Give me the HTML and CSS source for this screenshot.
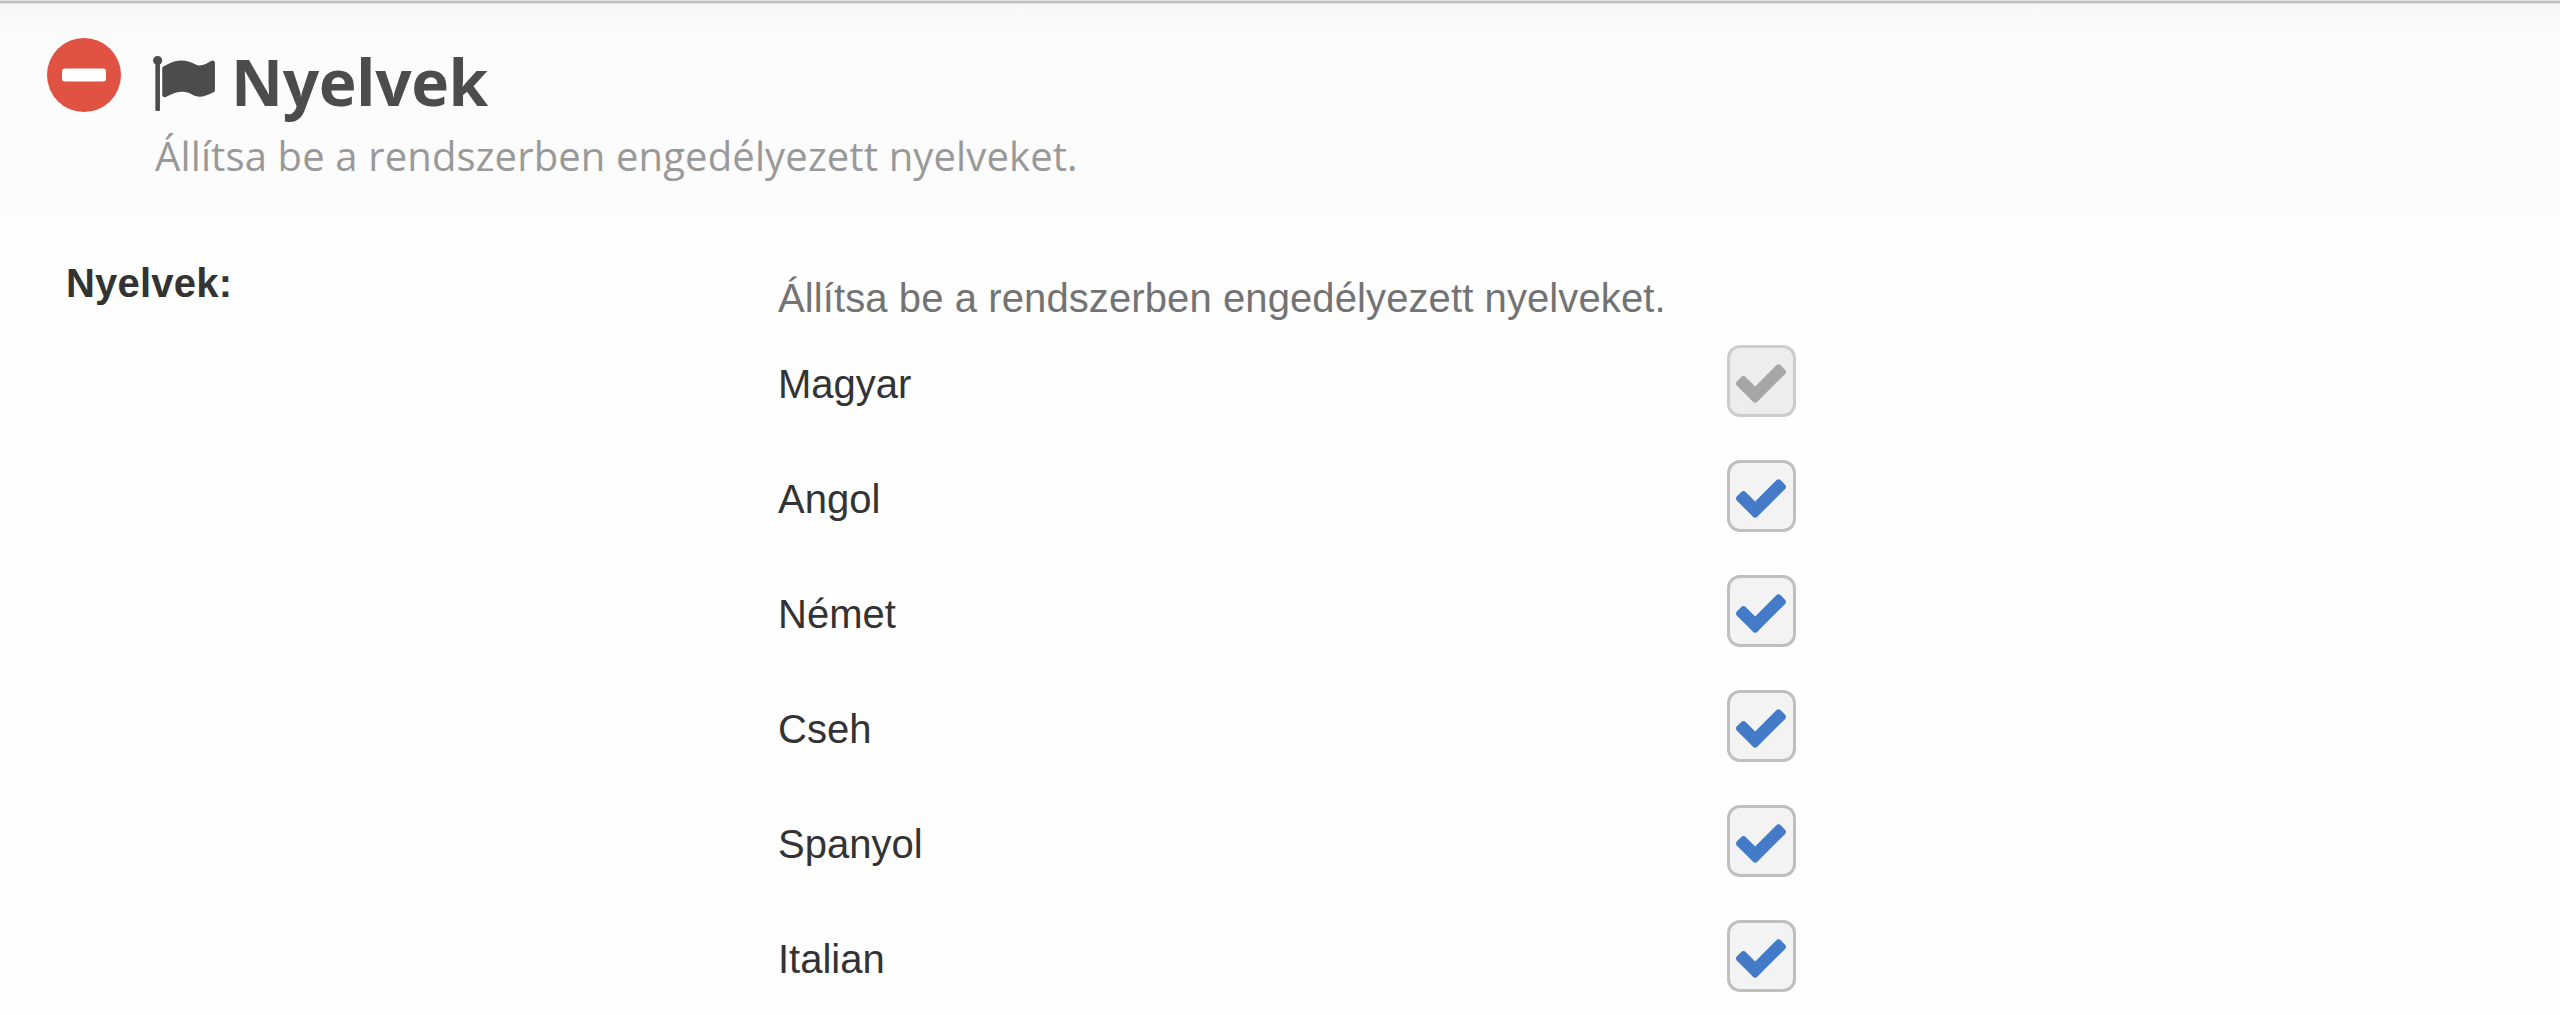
FILE: index.html
```html
<!DOCTYPE html>
<html lang="hu">
<head>
    <meta charset="UTF-8">
    <meta name="viewport" content="width=device-width, initial-scale=1.0">
    <title>Nyelvek</title>
    <link rel="stylesheet" href="styles.css">
</head>
<body>
    <svg width="0" height="0" class="sprite">
        <symbol id="check" viewBox="0 0 1550 1188">
            <path d="M1550 232q0 40-28 68l-724 724-136 136q-28 28-68 28t-68-28l-136-136-362-362q-28-28-28-68t28-68l136-136q28-28 68-28t68 28l294 295 656-657q28-28 68-28t68 28l136 136q28 28 28 68z"/>
        </symbol>
    </svg>

    <header class="section-header">
        <svg class="minus" viewBox="0 0 74 74">
            <circle cx="37" cy="37" r="37" fill="#e05242"/>
            <rect x="15" y="30.500" width="44" height="13" rx="3" fill="#fff"/>
        </svg>
        <div class="heading">
            <h1>
                <svg class="flag" viewBox="64 128 1728 1536">
                    <path d="M320 256q0 72-64 110v1266q0 13-9.500 22.500t-22.500 9.500h-64q-13 0-22.500-9.500t-9.500-22.500v-1266q-64-38-64-110 0-53 37.500-90.500t90.500-37.500 90.500 37.500 37.500 90.500zm1472 64v763q0 25-12.500 38.500t-39.500 27.500q-215 116-369 116-61 0-123.500-22t-108.500-48-115.500-48-142.500-22q-192 0-464 146-17 9-33 9-26 0-45-19t-19-45v-742q0-32 31-55 21-14 79-43 236-120 421-120 107 0 200 29t219 88q38 19 88 19 54 0 117.500-21t110-47 88-47 54.500-21q26 0 45 19t19 45z"/>
                </svg>
                <span>Nyelvek</span>
            </h1>
            <p>Állítsa be a rendszerben engedélyezett nyelveket.</p>
        </div>
    </header>

    <main class="form-row">
        <div class="label">Nyelvek:</div>
        <div class="languages">
            <p class="help">Állítsa be a rendszerben engedélyezett nyelveket.</p>
            <div class="language">
                <span>Magyar</span>
                <span class="checkbox disabled"><svg><use href="#check"/></svg></span>
            </div>
            <div class="language">
                <span>Angol</span>
                <span class="checkbox"><svg><use href="#check"/></svg></span>
            </div>
            <div class="language">
                <span>Német</span>
                <span class="checkbox"><svg><use href="#check"/></svg></span>
            </div>
            <div class="language">
                <span>Cseh</span>
                <span class="checkbox"><svg><use href="#check"/></svg></span>
            </div>
            <div class="language">
                <span>Spanyol</span>
                <span class="checkbox"><svg><use href="#check"/></svg></span>
            </div>
            <div class="language">
                <span>Italian</span>
                <span class="checkbox"><svg><use href="#check"/></svg></span>
            </div>
        </div>
    </main>
</body>
</html>
```
FILE: styles.css
```css
* {
    box-sizing: border-box;
}
body {
    margin: 0;
    height: 1015px;
    overflow: hidden;
    background: #fefefe;
    color: #333;
    font-family: "Liberation Sans", Arial, sans-serif;
    font-size: 40px;
}
.sprite {
    display: none;
}
h1, p {
    margin: 0;
}
.section-header {
    display: flex;
    height: 213px;
    padding: 38px 0 0 47px;
    background:
        linear-gradient(#e0e2e0 1px, #c0c2c0 1px, #c0c2c0 3px, #e0e2e0 3px) top / 100% 4px no-repeat,
        linear-gradient(#f7f7f7, #fcfcfc 45px);
    font-family: "Open Sans", sans-serif;
}
.minus {
    width: 74px;
    height: 74px;
}
.heading {
    margin-left: 32px;
}
.heading h1 {
    display: flex;
    height: 88px;
    color: #4c4c4c;
    font-size: 64px;
    font-weight: bold;
    letter-spacing: -0.4px;
    line-height: 88px;
}
.flag {
    width: 62px;
    height: 55px;
    margin: 18px 16px 0 0;
    fill: #4c4c4c;
}
.heading p {
    margin-left: 2px;
    color: #999;
    font-size: 40px;
    letter-spacing: 0.13px;
    line-height: 60px;
}
.form-row {
    display: flex;
}
.label {
    width: 778px;
    padding: 47px 0 0 66px;
    font-weight: bold;
    letter-spacing: 0.2px;
    line-height: 46px;
}
.languages {
    width: 1018px;
}
.help {
    height: 132px;
    padding-top: 62px;
    color: #737373;
    letter-spacing: 0.1px;
    line-height: 46px;
}
.language {
    display: flex;
    justify-content: space-between;
    height: 115px;
    line-height: 78px;
}
.checkbox {
    width: 69px;
    height: 72px;
    padding: 16px 0 0 6px;
    border: 3px solid #bfbfbf;
    border-radius: 13px;
    background: #f3f3f3;
    line-height: 0;
}
.checkbox svg {
    width: 50px;
    height: 39px;
    fill: #447bc8;
}
.checkbox.disabled {
    border-color: #ccc;
    background: #ededed;
}
.checkbox.disabled svg {
    fill: #a6a6a6;
}
```
